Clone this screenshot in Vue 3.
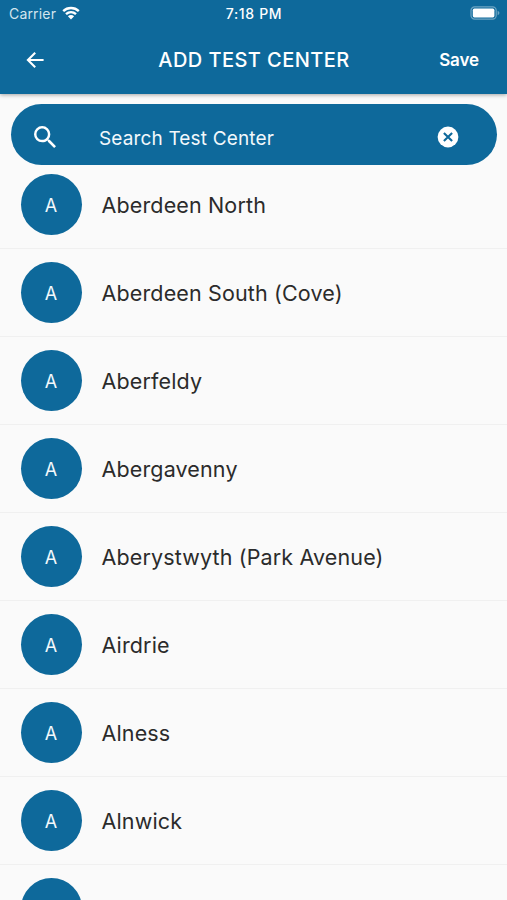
<script setup>
import { ref, computed } from "vue";

const search = ref('')
const centers = ref([
  "Aberdeen North",
  "Aberdeen South (Cove)",
  "Aberfeldy",
  "Abergavenny",
  "Aberystwyth (Park Avenue)",
  "Airdrie",
  "Alness",
  "Alnwick",
  "",
])

const filtered = computed(() => {
  const term = search.value.toLowerCase()
  return centers.value.filter((c) => c.toLowerCase().includes(term))
})

function clearSearch() {
  search.value = ''
}
</script>

<template>
  <div class="screen">
    <header class="top">
      <div class="status">
        <div class="carrier">
          <span>Carrier</span>
          <svg class="wifi" viewBox="0 0 18 14" width="18" height="14">
            <path d="M1.2 5.2C5.6 1 12.4 1 16.8 5.2" />
            <path d="M4 8.2C6.9 5.5 11.1 5.5 14 8.2" />
            <path class="dot" d="M9 13.4L5.9 10.2C7.7 8.6 10.3 8.6 12.1 10.2Z" />
          </svg>
        </div>
        <span class="time">7:18 PM</span>
        <svg class="battery" viewBox="0 0 31 14" width="31" height="14">
          <rect class="shell" x="1" y="0.9" width="25.2" height="12.2" rx="3.6" />
          <rect class="level" x="2.8" y="2.6" width="21.6" height="8.8" rx="1.6" />
          <path class="tip" d="M27.6 4.8C30 5.6 30 8.4 27.6 9.2Z" />
        </svg>
      </div>
      <div class="bar">
        <svg class="back" viewBox="0 0 18 18" width="18" height="18">
          <path d="M17.6 9H2.2M9.2 1.7L1.9 9L9.2 16.3" />
        </svg>
        <h1>ADD TEST CENTER</h1>
        <span class="save">Save</span>
      </div>
    </header>

    <div class="search">
      <svg class="glass" viewBox="3 3 17.49 17.49" width="22" height="22">
        <path d="M15.5 14h-.79l-.28-.27A6.471 6.471 0 0 0 16 9.5 6.5 6.5 0 1 0 9.5 16c1.61 0 3.09-.59 4.23-1.57l.27.28v.79l5 4.99L20.49 19l-4.99-5zm-6 0C7.01 14 5 11.99 5 9.5S7.01 5 9.5 5 14 7.01 14 9.5 11.99 14 9.5 14z" />
      </svg>
      <input v-model="search" placeholder="Search Test Center" />
      <svg class="clear" viewBox="0 0 22 22" width="22" height="22" @click="clearSearch">
        <circle cx="11" cy="11" r="10.4" />
        <path d="M6.9 6.9L15.1 15.1M15.1 6.9L6.9 15.1" />
      </svg>
    </div>

    <ul class="list">
      <li v-for="(center, index) in filtered" :key="index">
        <span class="avatar">{{ center.charAt(0) }}</span>
        <span class="name">{{ center }}</span>
      </li>
    </ul>
  </div>
</template>

<style>
body {
  background-color: #fafafa;
  overflow: hidden;
}
</style>

<style scoped>
.screen {
  height: 900px;
  overflow: hidden;
  background-color: #fafafa;
  font-family: Inter, "Liberation Sans", sans-serif;
}

.top {
  height: 93.5px;
  background-color: #0e699b;
  color: white;
  box-shadow: 0 1px 4px rgba(0, 0, 0, 0.35);
}

.status {
  display: grid;
  grid-template-columns: 1fr auto 1fr;
  align-items: center;
  height: 27px;
  padding: 0 7px 0 8px;
}
.carrier {
  display: flex;
  align-items: center;
  gap: 6px;
  padding-left: 1px;
  font-size: 14px;
  letter-spacing: 0.18px;
  color: #d3e5ee;
}
.wifi {
  margin-bottom: 2px;
}
.wifi path {
  fill: none;
  stroke: white;
  stroke-width: 2.4;
}
.wifi .dot {
  fill: white;
  stroke: none;
}
.time {
  font-size: 14px;
  font-weight: 500;
  letter-spacing: 0.65px;
}
.battery {
  justify-self: end;
  margin: 0 -1px 1px 0;
}
.shell {
  fill: none;
  stroke: #6ea5c3;
  stroke-width: 1.2;
}
.level {
  fill: white;
}
.tip {
  fill: #6ea5c3;
}

.bar {
  display: grid;
  grid-template-columns: 1fr auto 1fr;
  align-items: center;
  height: 66px;
  padding: 0 27px 0 26px;
}
.back path {
  fill: none;
  stroke: white;
  stroke-width: 2.1;
}
h1 {
  margin: 0;
  padding-left: 2px;
  font-size: 20px;
  font-weight: 500;
  letter-spacing: 0.45px;
}
.save {
  justify-self: end;
  margin-right: 1px;
  font-size: 17px;
  font-weight: 600;
  letter-spacing: -0.1px;
}

.search {
  display: flex;
  align-items: center;
  box-sizing: border-box;
  height: 61px;
  margin: 10px 10px 0 11px;
  padding: 6px 38px 0 23px;
  border-radius: 31px;
  background-color: #0e699b;
}
.glass {
  fill: white;
}
input {
  flex: 1;
  min-width: 0;
  margin-left: 43px;
  padding: 2px 0 0;
  border: none;
  outline: none;
  background: none;
  color: white;
  font-family: inherit;
  font-size: 19px;
  letter-spacing: 0.15px;
}
input::placeholder {
  color: #f2f8fb;
  opacity: 1;
}
.clear circle {
  fill: white;
}
.clear path {
  stroke: #0e699b;
  stroke-width: 2.1;
}

.list {
  margin: -3.5px 0 0;
  padding: 0;
  list-style: none;
}
li {
  display: flex;
  align-items: center;
  box-sizing: border-box;
  height: 88px;
  padding-left: 20.5px;
  border-bottom: 1px solid #f0f0f0;
}
.avatar {
  display: flex;
  align-items: center;
  justify-content: center;
  box-sizing: border-box;
  width: 61px;
  height: 61px;
  padding-top: 2px;
  border-radius: 50%;
  background-color: #0e699b;
  color: #f2f8fb;
  font-size: 18px;
}
.name {
  margin-left: 20px;
  color: #2b2b2b;
  font-size: 21.5px;
  letter-spacing: 0.14px;
}
</style>
